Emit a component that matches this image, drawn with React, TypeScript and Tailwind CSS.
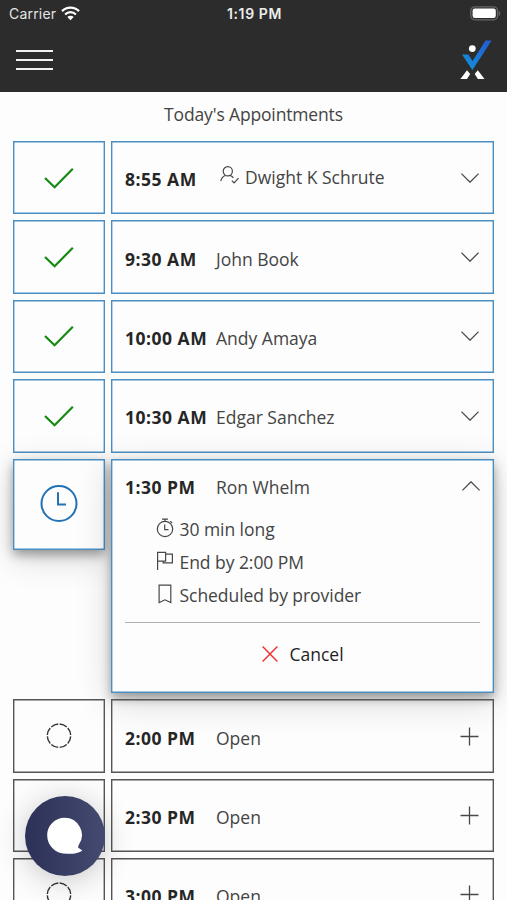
import React from "react";
import clsx from "clsx";

type Status = "done" | "current" | "open";

interface Appointment {
  time: string;
  name: string;
  status: Status;
  self?: boolean;
}

const appointments: Appointment[] = [
  { time: "8:55 AM", name: "Dwight K Schrute", status: "done", self: true },
  { time: "9:30 AM", name: "John Book", status: "done" },
  { time: "10:00 AM", name: "Andy Amaya", status: "done" },
  { time: "10:30 AM", name: "Edgar Sanchez", status: "done" },
  { time: "1:30 PM", name: "Ron Whelm", status: "current" },
  { time: "2:00 PM", name: "Open", status: "open" },
  { time: "2:30 PM", name: "Open", status: "open" },
  { time: "3:00 PM", name: "Open", status: "open" },
];

const blueBox = "border border-[#4a8fc4] shadow-[inset_0_0_0_0.4px_#4a8fc4]";
const grayBox = "border border-[#555555] shadow-[inset_0_0_0_0.4px_#555555]";
const raisedBox =
  "border border-[#4a8fc4] shadow-[inset_0_0_0_0.4px_#4a8fc4,0_5px_10px_rgba(0,0,0,0.34),0_8px_34px_rgba(0,0,0,0.16)]";

function StatusBar() {
  return (
    <div className="flex h-7 items-center justify-between pl-[9px] pr-[6px] font-[Inter,sans-serif] text-[#e4e4e4]">
      <div className="flex w-[120px] items-center gap-[6px]">
        <span className="-mt-px text-[14px] tracking-[0.2px]">Carrier</span>
        <svg className="-ml-px -mt-[2px]" width="19" height="15" viewBox="0 0 19 15" fill="none" stroke="#fff">
          <path d="M1 5.1a12 12 0 0 1 17 0" strokeWidth="2.3" />
          <path d="M4.1 8.4a7.6 7.6 0 0 1 10.8 0" strokeWidth="2.2" />
          <path d="M9.5 14.2 6.3 11a4.5 4.5 0 0 1 6.4 0z" fill="#fff" stroke="none" />
        </svg>
      </div>
      <span className="-mt-px text-[14px] font-semibold tracking-[0.6px] text-[#ededed]">1:19 PM</span>
      <div className="-mt-[2px] flex w-[121px] justify-end">
        <svg width="31" height="15" viewBox="0 0 31 15">
          <rect x="0.8" y="0.8" width="26.8" height="13" rx="4" fill="none" stroke="#666" strokeWidth="1.3" />
          <rect x="2.6" y="2.6" width="23.2" height="9.4" rx="2.2" fill="#fff" />
          <path d="M28.8 5c1.9.6 1.9 4.2 0 4.8z" fill="#666" />
        </svg>
      </div>
    </div>
  );
}

function Logo() {
  return (
    <svg width="32" height="40" viewBox="0 0 32 40">
      <defs>
        <linearGradient id="check" x1="0" y1="1" x2="1" y2="0">
          <stop offset="0.2" stopColor="#1489d8" />
          <stop offset="1" stopColor="#2458d0" />
        </linearGradient>
      </defs>
      <circle cx="12.3" cy="8.6" r="3.4" fill="#fff" />
      <path d="M2 14.5h6.3l4.3 6.4L25.5.5h6.2L12.4 30z" fill="url(#check)" />
      <path d="M7 30.2 10.2 34 7 39H.4z" fill="#fff" />
      <path d="m17.8 30.2 6.7 8.8h-6.6l-3.2-5z" fill="#fff" />
    </svg>
  );
}

function Chevron({ up }: { up?: boolean }) {
  return (
    <svg width="18" height="10" viewBox="0 0 18 10" fill="none" stroke="#484848" strokeWidth="1.3">
      <path d={up ? "M.4 9.4 9 .8l8.6 8.6" : "M.4.6 9 9.2 17.6.6"} />
    </svg>
  );
}

function Plus() {
  return (
    <svg width="19" height="19" viewBox="0 0 19 19" fill="none" stroke="#484848" strokeWidth="1.3">
      <path d="M9.5.5v18M.5 9.5h18" />
    </svg>
  );
}

function StatusIcon({ status }: { status: Status }) {
  if (status === "done") {
    return (
      <svg width="30" height="22" viewBox="0 0 30 22" fill="none" stroke="#148a14" strokeWidth="2.2">
        <path d="m1 11 9.6 9.2L28.8 1.8" />
      </svg>
    );
  }
  if (status === "current") {
    return (
      <svg width="38" height="38" viewBox="0 0 38 38" fill="none" stroke="#2372b4" strokeWidth="2">
        <circle cx="19" cy="18.5" r="17.5" />
        <path d="M18 7.3v12.3h8" />
      </svg>
    );
  }
  return (
    <svg width="26" height="26" viewBox="0 0 26 26" fill="none" stroke="#333" strokeWidth="1.4">
      <circle cx="13" cy="12.7" r="11.7" pathLength="80" strokeDasharray="8.4 1.6" strokeDashoffset="-0.8" />
    </svg>
  );
}

function PersonIcon() {
  return (
    <svg width="19" height="18" viewBox="0 0 19 18" fill="none" stroke="#484848" strokeWidth="1.2">
      <circle cx="7.8" cy="5.3" r="4.6" />
      <path d="M.8 15.2c.5-3 2.4-5 4.5-5.7M10.3 9.4c1.4.6 2.4 1.5 3 2.5M11.8 14.6l2.3 2.3 4.4-4.8" />
    </svg>
  );
}

function StopwatchIcon() {
  return (
    <svg width="18" height="20" viewBox="0 0 18 20" fill="none" stroke="#484848" strokeWidth="1.2">
      <circle cx="9" cy="11" r="7.7" />
      <path d="M6 1.1h6M9 1.1v2.2M14.2 3.2l2 2M8.7 6.5v5.1h3.8" />
    </svg>
  );
}

function FlagIcon() {
  return (
    <svg width="18" height="20" viewBox="0 0 18 20" fill="none" stroke="#484848" strokeWidth="1.2">
      <path d="M1.6 19V1.4h8v8.7h-8M9.6 3.2h6.8v8.7H7.2v-1.8" />
    </svg>
  );
}

function BookmarkIcon() {
  return (
    <svg width="18" height="20" viewBox="0 0 18 20" fill="none" stroke="#484848" strokeWidth="1.2">
      <path d="M3.1 1.2h11.7v17.3L9 15.8l-5.9 2.7z" />
    </svg>
  );
}

function Detail({ icon, children }: { icon: React.ReactNode; children: React.ReactNode }) {
  return (
    <div className="flex h-[33px] items-center gap-[6px]">
      <span className="-mt-[3px]">{icon}</span>
      <span className="text-[17.5px] tracking-[-0.05px]">{children}</span>
    </div>
  );
}

function Time({ children }: { children: React.ReactNode }) {
  return (
    <span className="w-[91px] shrink-0 whitespace-nowrap text-[17.5px] font-bold tracking-[0.5px] text-[#262626]">
      {children}
    </span>
  );
}

function AppointmentRow({ item }: { item: Appointment }) {
  const box = item.status === "open" ? grayBox : blueBox;
  return (
    <div className="flex h-[73.4px] gap-[6px]">
      <div className={clsx("flex w-[92px] items-center justify-center", box)}>
        <StatusIcon status={item.status} />
      </div>
      <div className={clsx("flex flex-1 items-center pl-[13px] pr-[14px]", box)}>
        <div className="flex flex-1 items-center pt-[3.4px]">
          <Time>{item.time}</Time>
          {item.self ? (
            <span className="-mt-[4px] flex items-center gap-[6px] pl-[4px]">
              <span className="-mt-[5px]">
                <PersonIcon />
              </span>
              <span className="text-[17.5px]">{item.name}</span>
            </span>
          ) : (
            <span className="text-[17.5px]">{item.name}</span>
          )}
        </div>
        {item.status === "open" ? <Plus /> : <Chevron />}
      </div>
    </div>
  );
}

function CurrentAppointment({ item }: { item: Appointment }) {
  return (
    <div className="flex h-[234.8px] items-start gap-[6px]">
      <div className={clsx("flex h-[91.4px] w-[92px] items-center justify-center bg-[#fdfdfd]", raisedBox)}>
        <StatusIcon status={item.status} />
      </div>
      <div className={clsx("flex h-full flex-1 flex-col bg-[#fdfdfd] pl-[13px] pr-[13px]", raisedBox)}>
        <div className="flex h-[53px] items-center pt-[3px]">
          <Time>{item.time}</Time>
          <span className="flex-1 text-[17.5px]">{item.name}</span>
          <span className="-mt-[4px]">
            <Chevron up />
          </span>
        </div>
        <div className="h-[110px] border-b border-[#b0b0b0] pl-[30.5px]">
          <Detail icon={<StopwatchIcon />}>30 min long</Detail>
          <Detail icon={<FlagIcon />}>End by 2:00 PM</Detail>
          <Detail icon={<BookmarkIcon />}>Scheduled by provider</Detail>
        </div>
        <button className="flex h-[64px] items-center justify-center gap-[11px] pl-px text-[17.5px] text-[#1f1f1f]">
          <svg className="-mt-[2px]" width="16" height="16" viewBox="0 0 16 16" fill="none" stroke="#ee2e2e" strokeWidth="1.4">
            <path d="m.6.6 14.8 14.8M15.4.6.6 15.4" />
          </svg>
          Cancel
        </button>
      </div>
    </div>
  );
}

function App() {
  return (
    <div className="relative h-[900px] w-[507px] overflow-hidden bg-[#fdfdfd] font-['Open_Sans','Noto_Sans',sans-serif] text-[#444444]">
      <header className="h-[92px] bg-[#2c2c2c]">
        <StatusBar />
        <div className="flex h-16 items-center justify-between pl-[16px] pr-[15px]">
          <div className="flex flex-col gap-[7px]">
            <span className="h-[2px] w-[37px] bg-[#f2f2f2]" />
            <span className="h-[2px] w-[37px] bg-[#f2f2f2]" />
            <span className="h-[2px] w-[37px] bg-[#f2f2f2]" />
          </div>
          <Logo />
        </div>
      </header>
      <h1 className="flex h-[49px] items-center justify-center pb-[5px] text-[17.5px] tracking-[-0.15px]">
        Today's Appointments
      </h1>
      <main className="flex flex-col gap-[6px] pl-[13px] pr-[13px]">
        {appointments.map((item) =>
          item.status === "current" ? (
            <CurrentAppointment key={item.time} item={item} />
          ) : (
            <AppointmentRow key={item.time} item={item} />
          )
        )}
      </main>
      <button className="absolute left-[25px] top-[796px] flex size-[80px] items-center justify-center rounded-full bg-linear-to-r from-[#2d3157] to-[#444a70] shadow-[0_4px_30px_rgba(0,0,0,0.22)]">
        <svg width="36" height="38" viewBox="0 0 36 38" fill="#fff">
          <path d="M17.3.8a17.3 17.3 0 0 1 14.3 27.4l-.6 2.4 4.3 2.8c-2.8 2.4-9 3.6-14.500 3.400C8 37 .2 28.500.2 18.200A17.200 17.200 0 0 1 17.300.8z" />
        </svg>
      </button>
    </div>
  );
}

export default App;
